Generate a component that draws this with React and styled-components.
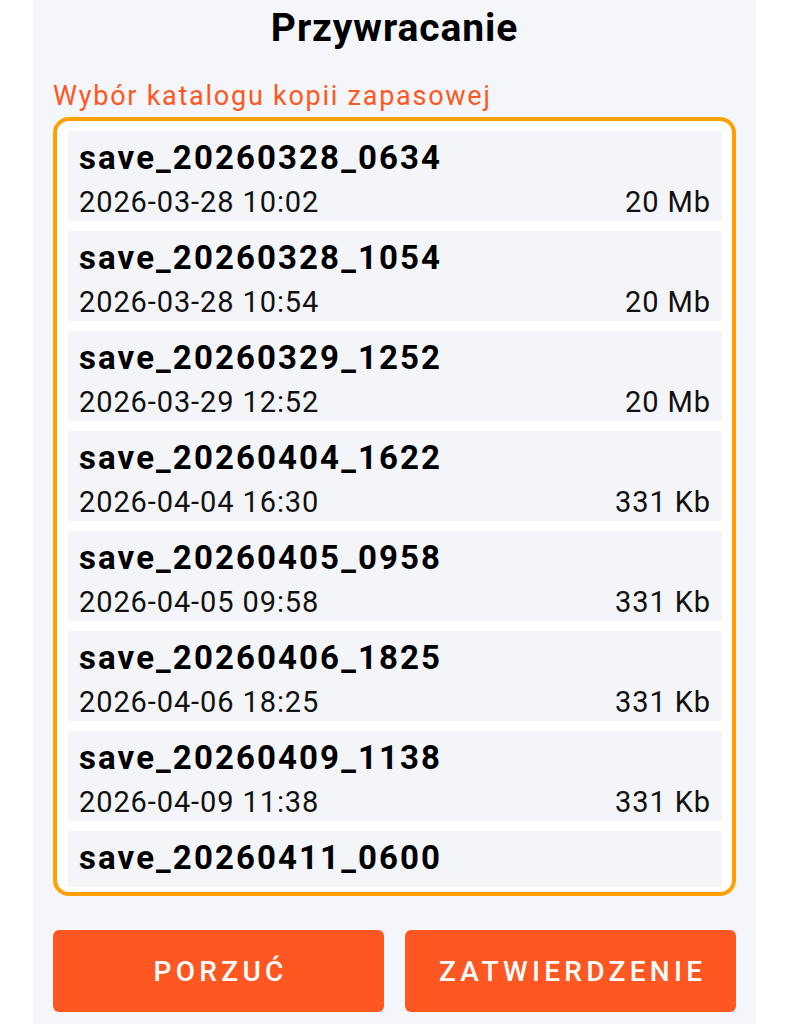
import React from "react";
import styled, { createGlobalStyle } from "styled-components";

const Global = createGlobalStyle`
  html, body { margin: 0; padding: 0; background: #ffffff; }
  body { font-family: Roboto, "Noto Sans", sans-serif; }
  * { box-sizing: border-box; }
`;

const Page = styled.div`
  width: 723px;
  height: 1024px;
  margin-left: 33px;
  background: #f5f6fa;
  padding: 0 20px;
  display: flex;
  flex-direction: column;
  overflow: hidden;
`;

const Title = styled.h1`
  margin: 0;
  padding-top: 4px;
  height: 56px;
  text-align: center;
  font-family: Roboto, sans-serif;
  font-weight: 700;
  font-size: 39px;
  letter-spacing: 0.9px;
  line-height: 48px;
  color: #000;
`;

const Label = styled.div`
  margin-top: 24px;
  font-family: Roboto, sans-serif;
  font-size: 27px;
  letter-spacing: 1.75px;
  line-height: 32px;
  color: #ff5722;
`;

const ListBox = styled.div`
  margin-top: 5px;
  height: 779px;
  border: 4px solid #ffa000;
  border-radius: 16px;
  background: #ffffff;
  padding: 10px 10px 5px 11px;
  display: flex;
  flex-direction: column;
`;

const Scroller = styled.div`
  flex: 1;
  min-height: 0;
  display: flex;
  flex-direction: column;
  gap: 10px;
  overflow-y: auto;
  scrollbar-width: none;
  &::-webkit-scrollbar { display: none; }
`;

const Item = styled.div`
  flex: none;
  height: 90px;
  background: #f4f5f9;
  padding: 10px 11px 0 11px;
`;

const Name = styled.div`
  font-family: Roboto, sans-serif;
  font-weight: 700;
  font-size: 33px;
  letter-spacing: 2.1px;
  line-height: 34px;
  color: #000;
`;

const Meta = styled.div`
  margin-top: 10px;
  display: flex;
  justify-content: space-between;
  font-family: Roboto, sans-serif;
  font-size: 29px;
  letter-spacing: 0.9px;
  line-height: 34px;
  color: #111;
`;

const Buttons = styled.div`
  margin-top: 34px;
  display: grid;
  grid-template-columns: 1fr 1fr;
  gap: 21px;
`;

const Button = styled.button`
  height: 82px;
  border: none;
  border-radius: 6px;
  background: #ff5722;
  color: #ffffff;
  font-family: Roboto, sans-serif;
  font-weight: 500;
  font-size: 28px;
  letter-spacing: 4.3px;
  text-indent: 4.3px;
  text-transform: uppercase;
  cursor: pointer;
`;

const items = [
  ["save_20260328_0634", "2026-03-28 10:02", "20 Mb"],
  ["save_20260328_1054", "2026-03-28 10:54", "20 Mb"],
  ["save_20260329_1252", "2026-03-29 12:52", "20 Mb"],
  ["save_20260404_1622", "2026-04-04 16:30", "331 Kb"],
  ["save_20260405_0958", "2026-04-05 09:58", "331 Kb"],
  ["save_20260406_1825", "2026-04-06 18:25", "331 Kb"],
  ["save_20260409_1138", "2026-04-09 11:38", "331 Kb"],
  ["save_20260411_0600"],
];

export default function App() {
  return (
    <>
      <Global />
      <Page>
        <Title>Przywracanie</Title>
        <Label>Wybór katalogu kopii zapasowej</Label>
        <ListBox>
          <Scroller>
            {items.map(([name, date, size]) => (
              <Item key={name}>
                <Name>{name}</Name>
                {date && (
                  <Meta>
                    <span>{date}</span>
                    <span>{size}</span>
                  </Meta>
                )}
              </Item>
            ))}
          </Scroller>
        </ListBox>
        <Buttons>
          <Button>Porzuć</Button>
          <Button>Zatwierdzenie</Button>
        </Buttons>
      </Page>
    </>
  );
}
